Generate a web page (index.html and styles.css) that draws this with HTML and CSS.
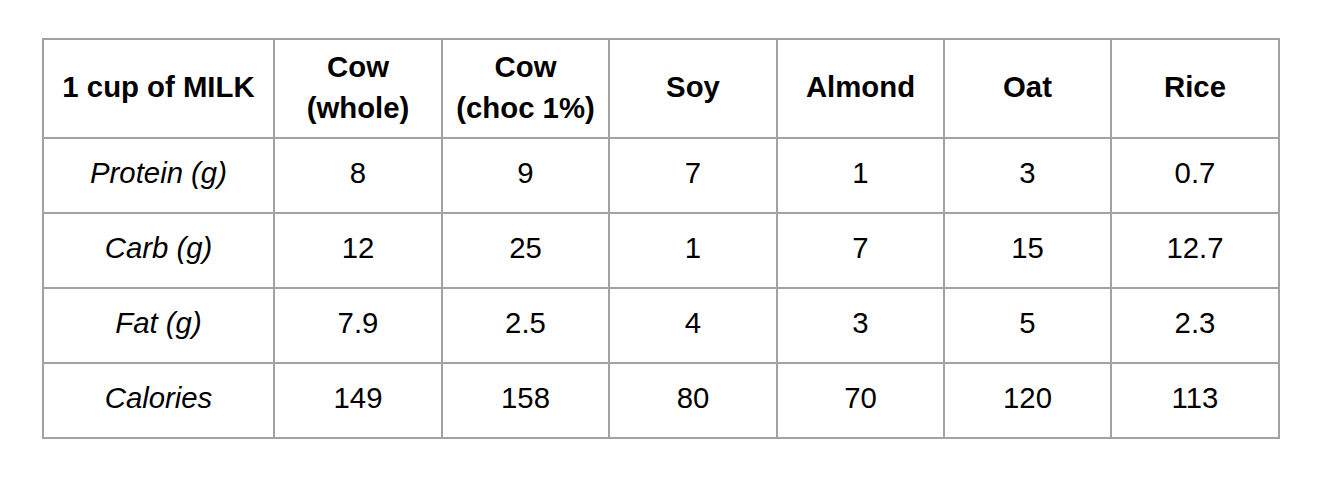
FILE: index.html
```html
<!DOCTYPE html>
<html>
<head>
<meta charset="utf-8">
<link rel="stylesheet" href="styles.css">
</head>
<body>
<table class="milk">
  <colgroup>
    <col class="c-label">
    <col class="c-a">
    <col class="c-b">
    <col class="c-a">
    <col class="c-b">
    <col class="c-b">
    <col class="c-a">
  </colgroup>
  <thead>
    <tr class="head">
      <th>1 cup of MILK</th>
      <th>Cow<br>(whole)</th>
      <th>Cow<br>(choc 1%)</th>
      <th>Soy</th>
      <th>Almond</th>
      <th>Oat</th>
      <th>Rice</th>
    </tr>
  </thead>
  <tbody>
    <tr>
      <td class="label">Protein (g)</td>
      <td>8</td><td>9</td><td>7</td><td>1</td><td>3</td><td>0.7</td>
    </tr>
    <tr>
      <td class="label">Carb (g)</td>
      <td>12</td><td>25</td><td>1</td><td>7</td><td>15</td><td>12.7</td>
    </tr>
    <tr>
      <td class="label">Fat (g)</td>
      <td>7.9</td><td>2.5</td><td>4</td><td>3</td><td>5</td><td>2.3</td>
    </tr>
    <tr>
      <td class="label">Calories</td>
      <td>149</td><td>158</td><td>80</td><td>70</td><td>120</td><td>113</td>
    </tr>
  </tbody>
</table>
</body>
</html>
```
FILE: styles.css
```css
html, body {
  margin: 0;
  background: #ffffff;
}
body {
  padding: 38px 0 0 42px;
  font-family: "Liberation Sans", Arial, sans-serif;
  color: #000000;
}
.milk {
  border-collapse: collapse;
  table-layout: fixed;
  width: 1238px;
  font-size: 29.33px;
  line-height: 1.15;
}
.c-label { width: 231px; }
.c-a { width: 168px; }
.c-b { width: 167px; }
.milk th,
.milk td {
  border: 2px solid #a2a2a2;
  text-align: center;
  vertical-align: middle;
  padding: 0 8px 6px;
}
.milk th {
  font-weight: bold;
  line-height: 41px;
  padding-bottom: 4px;
}
.head {
  height: 99px;
}
.milk tbody tr {
  height: 75px;
}
.label {
  font-style: italic;
}
```
